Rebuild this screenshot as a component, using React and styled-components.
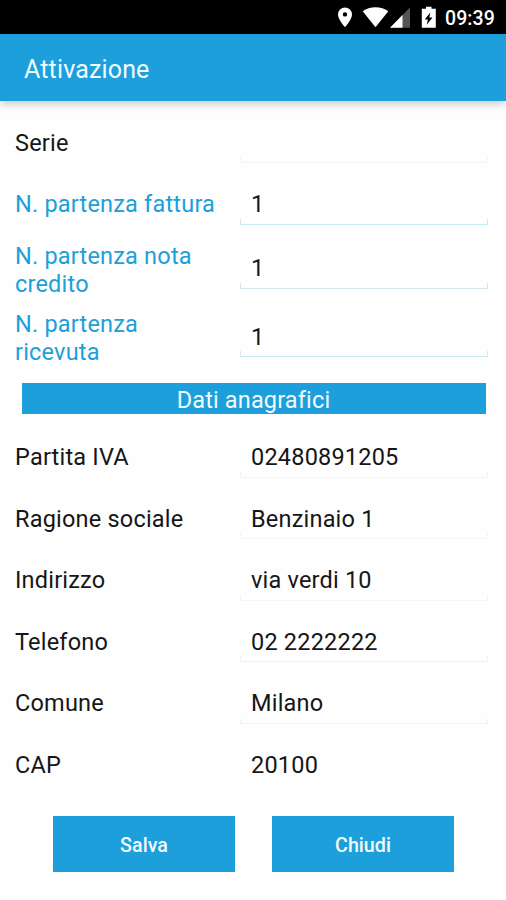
import styled, { createGlobalStyle } from "styled-components";

const GlobalStyles = createGlobalStyle`
  :root {
    --color-brand: #1c9fda;
    --color-text: #161616;
  }

  * {
    box-sizing: border-box;
    margin: 0;
    padding: 0;
  }

  body {
    font-family: Roboto, sans-serif;
    color: var(--color-text);
    background-color: #fefefe;
  }
`;

const Screen = styled.div`
  width: 506px;
  height: 900px;
  display: flex;
  flex-direction: column;
  overflow: hidden;
`;

const StatusBar = styled.div`
  height: 34px;
  display: flex;
  justify-content: flex-end;
  align-items: center;
  padding-right: 11px;
  background-color: #000;
  color: #fff;
`;

const StatusIcons = styled.svg`
  display: block;
  width: 110px;
  height: 34px;
`;

const Clock = styled.span`
  width: 50px;
  padding-top: 3px;
  font-size: 19.5px;
  font-weight: 500;
  line-height: 24px;
  letter-spacing: 0.1px;
  white-space: nowrap;
`;

const AppBar = styled.header`
  height: 67px;
  display: flex;
  align-items: center;
  padding: 4px 24px 0;
  background-color: var(--color-brand);
  box-shadow: 0 2px 9px rgba(0, 0, 0, 0.25);
`;

const Title = styled.h1`
  font-size: 25px;
  font-weight: 400;
  letter-spacing: 0.15px;
  color: #f2fbff;
`;

const Form = styled.main`
  flex-grow: 1;
  display: flex;
  flex-direction: column;
  padding-top: 11.2px;
`;

const StyledRow = styled.div`
  height: ${(props) => (props.$tall ? "68.5px" : "61.5px")};
  display: grid;
  grid-template-columns: 210px 248px;
  column-gap: 15px;
  align-items: center;
  padding-left: 15px;
  flex-shrink: 0;
`;

const Label = styled.span`
  padding-top: ${(props) => (props.$tall ? "1px" : "0")};
  font-size: 23.5px;
  line-height: 28px;
  letter-spacing: 0.2px;
  color: ${(props) => (props.$accent ? "var(--color-brand)" : "inherit")};
`;

const Field = styled.div`
  height: ${(props) => (props.$tall ? "38.6px" : "41px")};
  display: flex;
  flex-direction: column;
  justify-content: flex-end;
`;

const Value = styled.span`
  padding-left: 11px;
  font-size: 23.5px;
  line-height: 28px;
  letter-spacing: 0.2px;
  margin-bottom: 0.6px;
`;

const Underline = styled.div`
  height: 6px;
  border: 1px solid ${(props) => props.$color};
  border-top: none;
`;

const Section = styled.h2`
  height: 31px;
  margin: 10.8px 20.5px 12.6px 21.5px;
  flex-shrink: 0;
  background-color: var(--color-brand);
  color: #f2fbff;
  font-size: 23.5px;
  font-weight: 400;
  line-height: 34px;
  letter-spacing: 0.15px;
  text-align: center;
`;

const Buttons = styled.div`
  display: flex;
  gap: 37px;
  padding: 20.4px 0 0 53px;
`;

const Button = styled.button`
  width: 182px;
  height: 56px;
  padding-top: 3px;
  border: none;
  background-color: var(--color-brand);
  color: #f2fbff;
  font-family: inherit;
  font-size: 19.7px;
  font-weight: 500;
`;

const numbering = [
  { label: "Serie", value: "", line: "#eef5f6" },
  { label: "N. partenza fattura", value: "1", line: "#caebf8", accent: true },
  {
    label: "N. partenza nota credito",
    value: "1",
    line: "#d3e9ed",
    accent: true,
    tall: true,
  },
  {
    label: "N. partenza ricevuta",
    value: "1",
    line: "#cdeaf8",
    accent: true,
    tall: true,
  },
];

const registry = [
  { label: "Partita IVA", value: "02480891205", line: "#eff6f7" },
  { label: "Ragione sociale", value: "Benzinaio 1", line: "#eff6f7" },
  { label: "Indirizzo", value: "via verdi 10", line: "#eff6f7" },
  { label: "Telefono", value: "02 2222222", line: "#e6f5f7" },
  { label: "Comune", value: "Milano", line: "#eaf6f9" },
  { label: "CAP", value: "20100", line: "transparent" },
];

function Row({ label, value, line, accent, tall }) {
  return (
    <StyledRow $tall={tall}>
      <Label $accent={accent} $tall={tall}>
        {label}
      </Label>
      <Field $tall={tall}>
        <Value>{value}</Value>
        <Underline $color={line} />
      </Field>
    </StyledRow>
  );
}

function App() {
  return (
    <>
      <GlobalStyles />
      <Screen>
        <StatusBar>
          <StatusIcons viewBox="335 0 110 34" fill="#fff">
            {/* location */}
            <path
              fillRule="evenodd"
              d="M345 7.5a7 7 0 0 0-7 7c0 5.2 7 12.7 7 12.7s7-7.5 7-12.7a7 7 0 0 0-7-7zm0 4.7a2.2 2.2 0 1 1 0 4.4 2.2 2.2 0 0 1 0-4.4z"
            />
            {/* wifi */}
            <path d="M375.5 27.3 362.7 11.3C366.3 8.7 370.7 7.3 375.5 7.3s9.2 1.4 12.8 4z" />
            {/* signal */}
            <path fill="#555" d="M410 7.5V27.7H390z" />
            <path d="M402.5 15.1V27.7H390z" />
            {/* battery */}
            <path
              fillRule="evenodd"
              d="M426 6.8h5.5v1.9h4.3V27.8H421.8V8.7H426zM430.3 12.5l-5.6 7h3.2l-1.2 5.3 5.8-7.3h-3.2z"
            />
          </StatusIcons>
          <Clock>09:39</Clock>
        </StatusBar>
        <AppBar>
          <Title>Attivazione</Title>
        </AppBar>
        <Form>
          {numbering.map((field) => (
            <Row key={field.label} {...field} />
          ))}
          <Section>Dati anagrafici</Section>
          {registry.map((field) => (
            <Row key={field.label} {...field} />
          ))}
          <Buttons>
            <Button>Salva</Button>
            <Button>Chiudi</Button>
          </Buttons>
        </Form>
      </Screen>
    </>
  );
}

export default App;
